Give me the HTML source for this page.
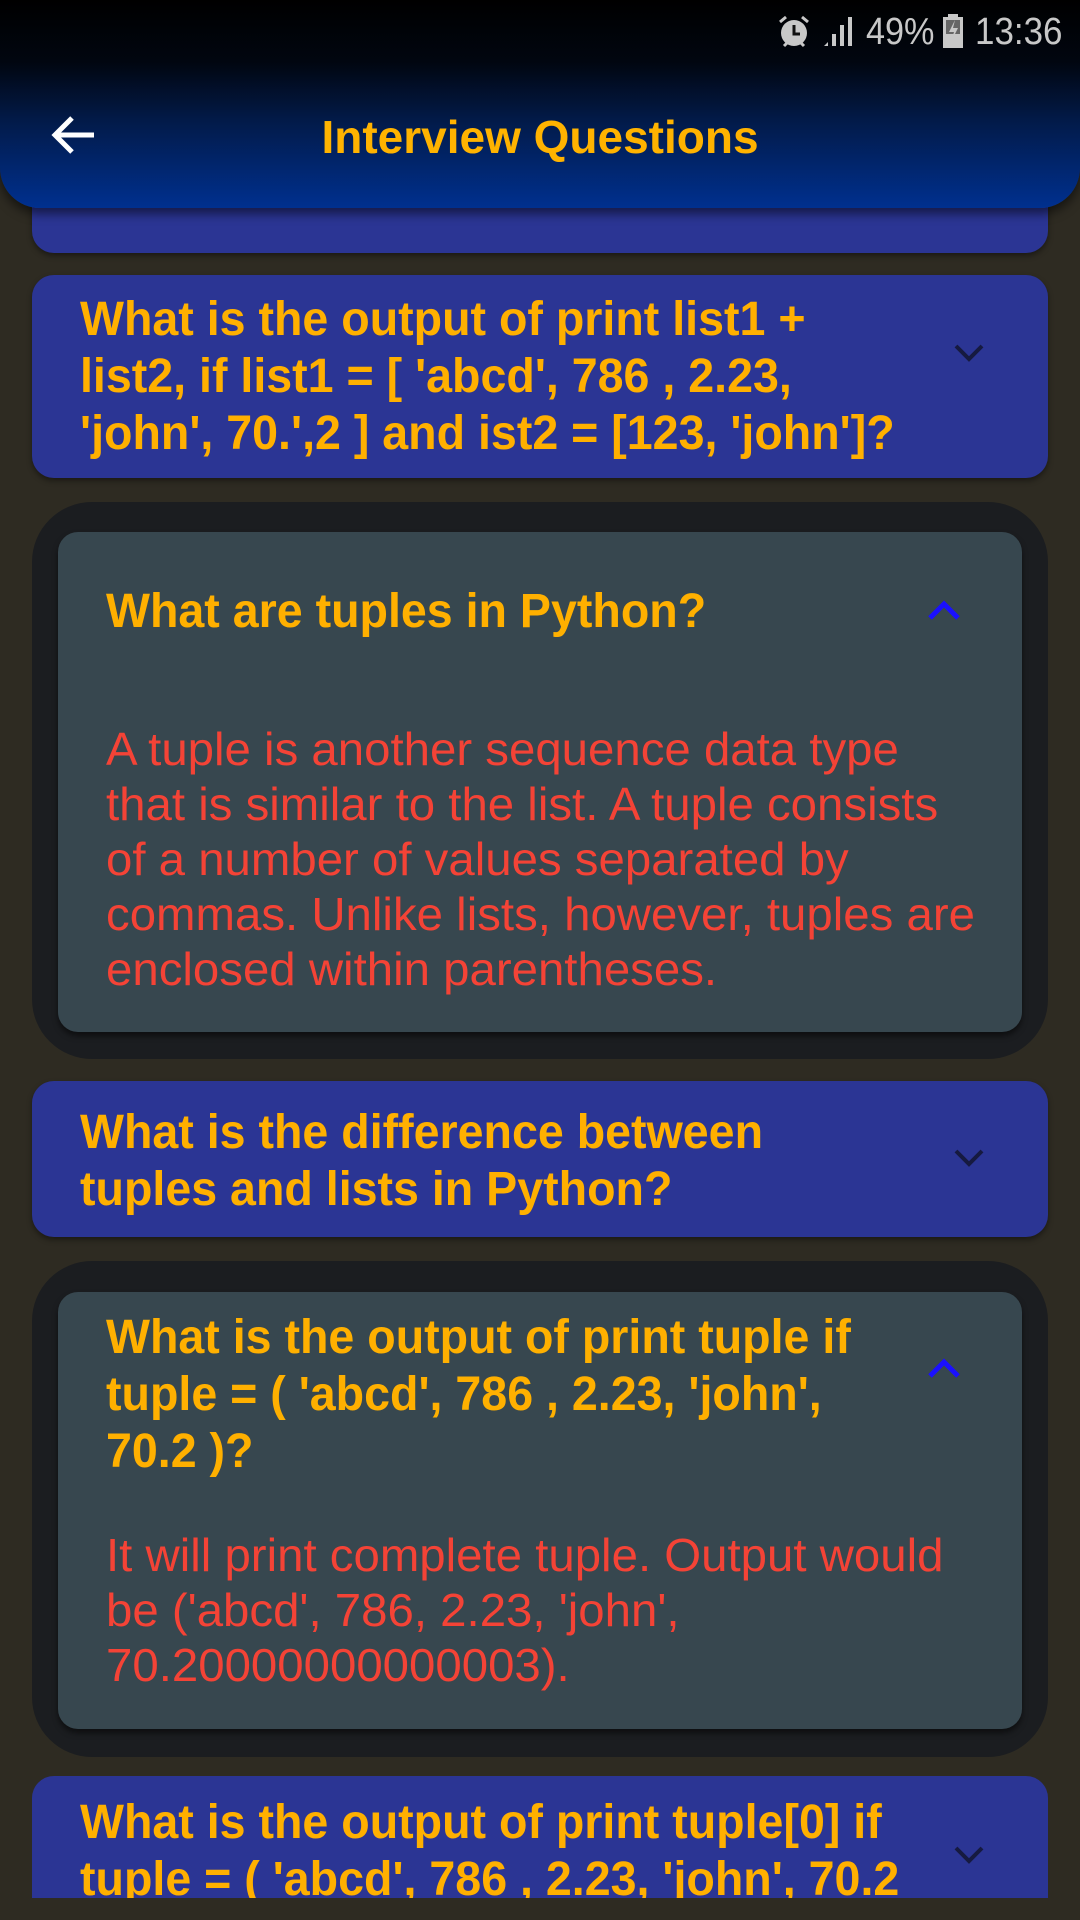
<!DOCTYPE html>
<html><head><meta charset="utf-8"><style>
*{margin:0;padding:0;box-sizing:border-box}
body{width:1080px;height:1920px;background:#2e2b22;position:relative;overflow:hidden;font-family:"Liberation Sans",sans-serif}
.abs{position:absolute}
.card{position:absolute;left:32px;width:1016px;background:#2b3594;border-radius:22px;box-shadow:0 3px 6px rgba(0,0,0,.4)}
.outer{position:absolute;left:32px;width:1016px;background:#1b1d20;border-radius:60px}
.inner{position:absolute;left:26px;right:26px;background:#37474f;border-radius:20px;box-shadow:0 4px 6px rgba(0,0,0,.5)}
.q{position:absolute;color:#ffb000;font-weight:bold;font-size:48px;line-height:57px;white-space:nowrap}
.q div,.a div{transform:scaleX(.97);transform-origin:left center}
.a{position:absolute;color:#f44336;font-size:46px;line-height:55px;white-space:nowrap}
.a div{transform:scaleX(1.03)}
</style></head><body>
<div class="card" style="top:150px;height:103px"></div>
<div class="abs" style="left:0;top:0;width:1080px;height:208px;background:linear-gradient(#000 0,#010610 62px,#021a48 120px,#00308f 208px);border-radius:0 0 40px 40px;box-shadow:0 6px 10px rgba(0,0,0,.5)"></div>
<!-- status bar -->
<svg class="abs" style="left:776px;top:14px" width="36" height="36" viewBox="0 0 36 36"><circle cx="18" cy="19" r="13" fill="#c8c8c8"/><path d="M18 11v9h6" stroke="#111" stroke-width="3" fill="none"/><path d="M4 8l6-5M32 8l-6-5M8 32l3-3M28 32l-3-3" stroke="#c8c8c8" stroke-width="3"/></svg>
<svg class="abs" style="left:822px;top:16px" width="34" height="32" viewBox="0 0 34 32"><path d="M2 30h4v-4zM10 30h4V18h-4zM18 30h4V9h-4zM26 30h4V1h-4z" fill="#c8c8c8"/></svg>
<div class="abs" style="left:866px;top:12px;color:#c8c8c8;font-size:38px;line-height:40px;transform:scaleX(.9);transform-origin:left">49%</div>
<svg class="abs" style="left:942px;top:14px" width="22" height="34" viewBox="0 0 22 34"><rect x="6" y="0" width="10" height="4" fill="#c8c8c8"/><rect x="1" y="3" width="20" height="31" fill="#c8c8c8"/><rect x="4" y="6" width="14" height="14" fill="#666"/><path d="M13 6l-6 12h5l-3 10 7-14h-5z" fill="#c8c8c8"/></svg>
<div class="abs" style="left:975px;top:12px;color:#c8c8c8;font-size:38px;line-height:40px;transform:scaleX(.92);transform-origin:left">13:36</div>
<!-- app bar -->
<svg class="abs" style="left:50px;top:114px" width="46" height="42" viewBox="0 0 46 42"><path d="M44 21H6M22 4L5 21l17 17" stroke="#fff" stroke-width="5" fill="none"/></svg>
<div class="abs" style="left:0;width:1080px;top:110px;text-align:center;color:#ffb300;font-weight:bold;font-size:46px;line-height:54px"><span style="display:inline-block;transform:scaleX(1)">Interview Questions</span></div>

<!-- card 2 -->
<div class="card" style="top:275px;height:203px"></div>
<div class="q" style="left:80px;top:291px"><div>What is the output of print list1 +</div><div>list2, if list1 = [ 'abcd', 786 , 2.23,</div><div>'john', 70.',2 ] and ist2 = [123, 'john']?</div></div>
<svg class="abs" style="left:954px;top:343px" width="30" height="20" viewBox="0 0 30 20"><path d="M2 3l13 13L28 3" stroke="#161a40" stroke-width="4" fill="none"/></svg>

<!-- expanded 1 -->
<div class="outer" style="top:502px;height:557px"><div class="inner" style="top:30px;bottom:27px"></div></div>
<div class="q" style="left:106px;top:583px"><div>What are tuples in Python?</div></div>
<svg class="abs" style="left:927px;top:598px" width="34" height="24" viewBox="0 0 34 24"><path d="M3 20L17 6l14 14" stroke="#1a10ff" stroke-width="5" fill="none"/></svg>
<div class="a" style="left:106px;top:722px"><div>A tuple is another sequence data type</div><div>that is similar to the list. A tuple consists</div><div>of a number of values separated by</div><div>commas. Unlike lists, however, tuples are</div><div>enclosed within parentheses.</div></div>

<!-- card 4 -->
<div class="card" style="top:1081px;height:156px"></div>
<div class="q" style="left:80px;top:1104px"><div>What is the difference between</div><div>tuples and lists in Python?</div></div>
<svg class="abs" style="left:954px;top:1148px" width="30" height="20" viewBox="0 0 30 20"><path d="M2 3l13 13L28 3" stroke="#161a40" stroke-width="4" fill="none"/></svg>

<!-- expanded 2 -->
<div class="outer" style="top:1261px;height:496px"><div class="inner" style="top:31px;bottom:28px"></div></div>
<div class="q" style="left:106px;top:1309px"><div>What is the output of print tuple if</div><div>tuple = ( 'abcd', 786 , 2.23, 'john',</div><div>70.2 )?</div></div>
<svg class="abs" style="left:927px;top:1356px" width="34" height="24" viewBox="0 0 34 24"><path d="M3 20L17 6l14 14" stroke="#1a10ff" stroke-width="5" fill="none"/></svg>
<div class="a" style="left:106px;top:1528px"><div>It will print complete tuple. Output would</div><div>be ('abcd', 786, 2.23, 'john',</div><div>70.20000000000003).</div></div>

<!-- last card -->
<div class="abs" style="left:32px;top:1776px;width:1016px;height:122px;overflow:hidden;border-radius:22px 22px 0 0">
<div style="position:absolute;inset:0;background:#2b3594"></div>
<div class="q" style="left:48px;top:18px"><div>What is the output of print tuple[0] if</div><div>tuple = ( 'abcd', 786 , 2.23, 'john', 70.2</div></div>
<svg class="abs" style="left:922px;top:69px" width="30" height="20" viewBox="0 0 30 20"><path d="M2 3l13 13L28 3" stroke="#161a40" stroke-width="4" fill="none"/></svg>
</div>
</body></html>
